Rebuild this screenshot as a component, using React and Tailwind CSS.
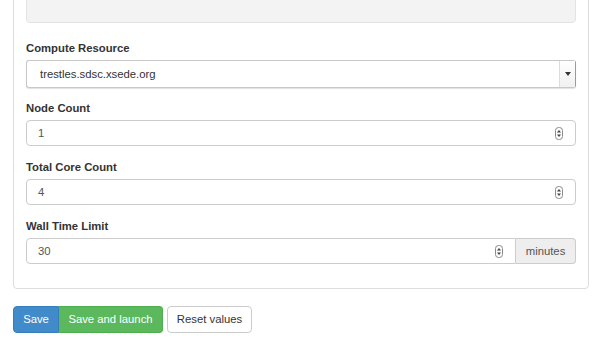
import React from "react";

function Spinner() {
  return (
    <svg width="8" height="13" viewBox="0 0 8 13" className="shrink-0">
      <rect x="0.5" y="0.5" width="7" height="12" rx="3" fill="#fbfbfb" stroke="#8a8a8a" />
      <path d="M4 3 L6 5.5 L2 5.5 Z" fill="#444" />
      <path d="M4 10 L6 7.5 L2 7.5 Z" fill="#444" />
    </svg>
  );
}

function NumberField({ value }) {
  return (
    <div className="flex h-[26px] items-center justify-between rounded-[4px] border border-[#cccccc] bg-white pl-[11px] pr-[12px] text-[11.3px] text-[#555555]">
      <span>{value}</span>
      <Spinner />
    </div>
  );
}

function Label({ children }) {
  return (
    <div className="mb-[3px] text-[11.3px] font-bold leading-[17px] text-[#333333]">
      {children}
    </div>
  );
}

export default function App() {
  return (
    <div
      className="min-h-screen bg-white pl-[13px] pr-[10px]"
      style={{ fontFamily: '"Liberation Sans", Arial, sans-serif' }}
    >
      <div className="-mt-[30px] rounded-[4px] border border-[#dddddd] px-[12px] pt-[12px] pb-[24px]">
        <div className="mb-[17px] h-[40px] rounded-[4px] border border-[#e3e3e3] bg-[#f3f3f3]"></div>

        <div className="mb-[12px]">
          <Label>Compute Resource</Label>
          <div className="flex h-[28px] items-stretch rounded-[3px] border border-[#c8c8c8] border-r-[#9a9a9a] bg-white text-[11.3px] text-[#333333] shadow-[0_1px_1px_rgba(0,0,0,0.12)]">
            <div className="flex flex-1 items-center pl-[13px]">trestles.sdsc.xsede.org</div>
            <div className="flex w-[16px] items-center justify-center border-l border-[#dcdcdc] bg-gradient-to-b from-white to-[#f0f0f0]">
              <svg width="6" height="4" viewBox="0 0 6 4">
                <path d="M0 0 L6 0 L3 4 Z" fill="#333" />
              </svg>
            </div>
          </div>
        </div>

        <div className="mb-[13px]">
          <Label>Node Count</Label>
          <NumberField value="1" />
        </div>

        <div className="mb-[13px]">
          <Label>Total Core Count</Label>
          <NumberField value="4" />
        </div>

        <div>
          <Label>Wall Time Limit</Label>
          <div className="flex h-[26px] text-[11.3px] text-[#555555]">
            <div className="flex flex-1 items-center justify-between rounded-l-[4px] border border-[#cccccc] bg-white pl-[11px] pr-[12px]">
              <span>30</span>
              <Spinner />
            </div>
            <div className="flex w-[60px] items-center justify-center rounded-r-[4px] border border-l-0 border-[#cccccc] bg-[#eeeeee]">
              minutes
            </div>
          </div>
        </div>
      </div>

      <div className="mt-[17px] flex items-center gap-[4px] text-[11.3px]">
        <div className="flex">
          <button className="h-[27px] w-[46px] rounded-l-[4px] border border-[#357ebd] bg-[#428bca] text-white">
            Save
          </button>
          <button className="h-[27px] w-[104px] rounded-r-[4px] border border-l-0 border-[#4cae4c] bg-[#5cb85c] text-white">
            Save and launch
          </button>
        </div>
        <button className="h-[27px] w-[85px] rounded-[4px] border border-[#cccccc] bg-white text-[#333333]">
          Reset values
        </button>
      </div>
    </div>
  );
}
